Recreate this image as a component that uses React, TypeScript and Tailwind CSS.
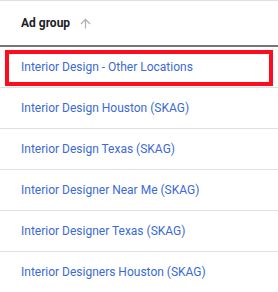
const rows = [
  'Interior Design - Other Locations',
  'Interior Design Houston (SKAG)',
  'Interior Design Texas (SKAG)',
  'Interior Designer Near Me (SKAG)',
  'Interior Designer Texas (SKAG)',
  'Interior Designers Houston (SKAG)',
]

const App = () => {
  return (
    <div className="w-[278px] h-[292px] overflow-hidden bg-white font-['Roboto',sans-serif]">
      <div className="border-t border-[#e0e0e0] h-[44px] flex items-center pl-[21px] gap-[8px] border-b-2 border-b-[#757575] box-content">
        <span className="text-[12px] font-bold text-[#202124]">Ad group</span>
        <svg width="15" height="15" viewBox="0 0 24 24" fill="#b0b0b0">
          <path d="M4 12l1.41 1.41L11 7.83V20h2V7.83l5.58 5.59L20 12l-8-8-8 8z" />
        </svg>
      </div>
      {rows.map((r, i) => (
        <div key={r} className="relative h-[41px] flex items-center pl-[21px] border-b border-[#e0e0e0]">
          <span className="text-[12px] text-[#3b6ad6]">{r}</span>
          {i === 0 && (
            <div className="absolute left-[5px] right-[5px] top-[3px] bottom-[1px] border-4 border-[#ff0a1e]" />
          )}
        </div>
      ))}
    </div>
  )
}

export default App
